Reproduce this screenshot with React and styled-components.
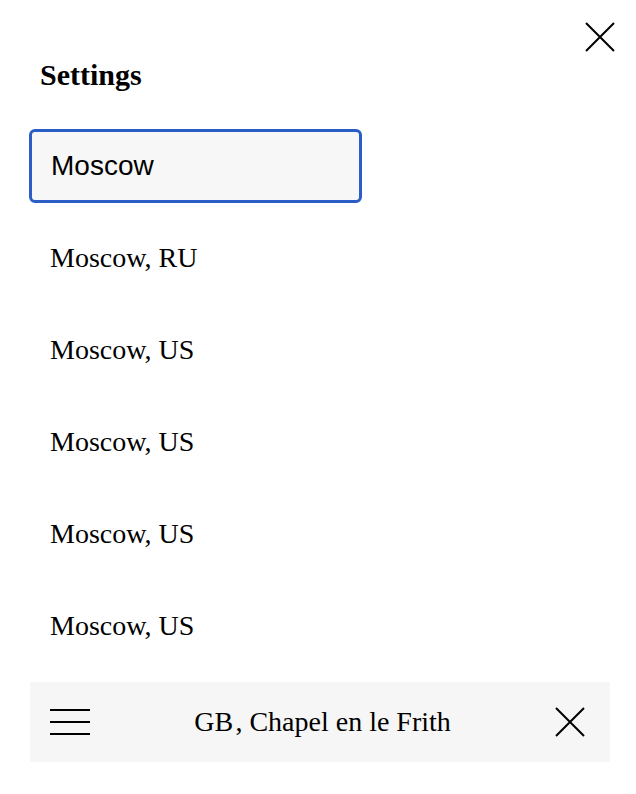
import React from "react";
import styled, { createGlobalStyle } from "styled-components";

const GlobalStyle = createGlobalStyle`
  body {
    margin: 0;
    background: #fff;
    font-family: "Liberation Serif", "Times New Roman", serif;
    color: #000;
  }
`;

const Page = styled.div`
  width: 636px;
  height: 794px;
  box-sizing: border-box;
  padding: 0 26px 0 30px;
  display: flex;
  flex-direction: column;
`;

const TopBar = styled.div`
  display: flex;
  justify-content: flex-end;
  padding-top: 22px;
  margin-right: -5px;
  height: 30px;
`;

const IconButton = styled.button`
  background: none;
  border: none;
  padding: 0;
  width: ${(p) => p.$width || 30}px;
  height: 30px;
  display: flex;
  align-items: center;
  justify-content: center;
  cursor: pointer;
`;

const Title = styled.h1`
  margin: 8px 0 0 10px;
  font-size: 30px;
  line-height: 30px;
  font-weight: bold;
`;

const SearchInput = styled.input`
  margin: 39px 0 0 -1px;
  width: 333px;
  height: 74px;
  box-sizing: border-box;
  border: 3px solid #2a5dc6;
  border-radius: 6px;
  background: #f7f7f7;
  padding: 0 0 0 19px;
  font-family: "Liberation Sans", Arial, sans-serif;
  font-size: 28px;
  color: #000;
  outline: none;
  caret-color: #000;
`;

const List = styled.ul`
  list-style: none;
  margin: 9px 0 0;
  padding: 0;
`;

const Item = styled.li`
  height: 92px;
  line-height: 92px;
  padding-left: 20px;
  font-size: 28px;
`;

const BottomBar = styled.div`
  margin-top: 10px;
  height: 80px;
  width: 580px;
  background: #f6f6f6;
  display: flex;
  align-items: center;
  justify-content: space-between;
  padding: 0 25px 0 20px;
  box-sizing: border-box;
`;

const Location = styled.span`
  font-size: 28px;
`;

const CloseIcon = () => (
  <svg width="30" height="30" viewBox="0 0 30 30">
    <path d="M1 1 L29 29 M29 1 L1 29" stroke="#000" strokeWidth="2" fill="none" />
  </svg>
);

const MenuIcon = () => (
  <svg width="40" height="30" viewBox="0 0 40 30">
    <path d="M0 3 H40 M0 15 H40 M0 27 H40" stroke="#000" strokeWidth="2" fill="none" />
  </svg>
);

const cities = ["Moscow, RU", "Moscow, US", "Moscow, US", "Moscow, US", "Moscow, US"];

const App = () => (
  <>
    <GlobalStyle />
    <Page>
      <TopBar>
        <IconButton aria-label="Close">
          <CloseIcon />
        </IconButton>
      </TopBar>
      <Title>Settings</Title>
      <SearchInput defaultValue="Moscow" autoFocus />
      <List>
        {cities.map((c, i) => (
          <Item key={i}>{c}</Item>
        ))}
      </List>
      <BottomBar>
        <IconButton aria-label="Menu" $width={40}>
          <MenuIcon />
        </IconButton>
        <Location>GB{"\u200A"}, Chapel en le Frith</Location>
        <IconButton aria-label="Clear">
          <CloseIcon />
        </IconButton>
      </BottomBar>
    </Page>
  </>
);

export default App;
